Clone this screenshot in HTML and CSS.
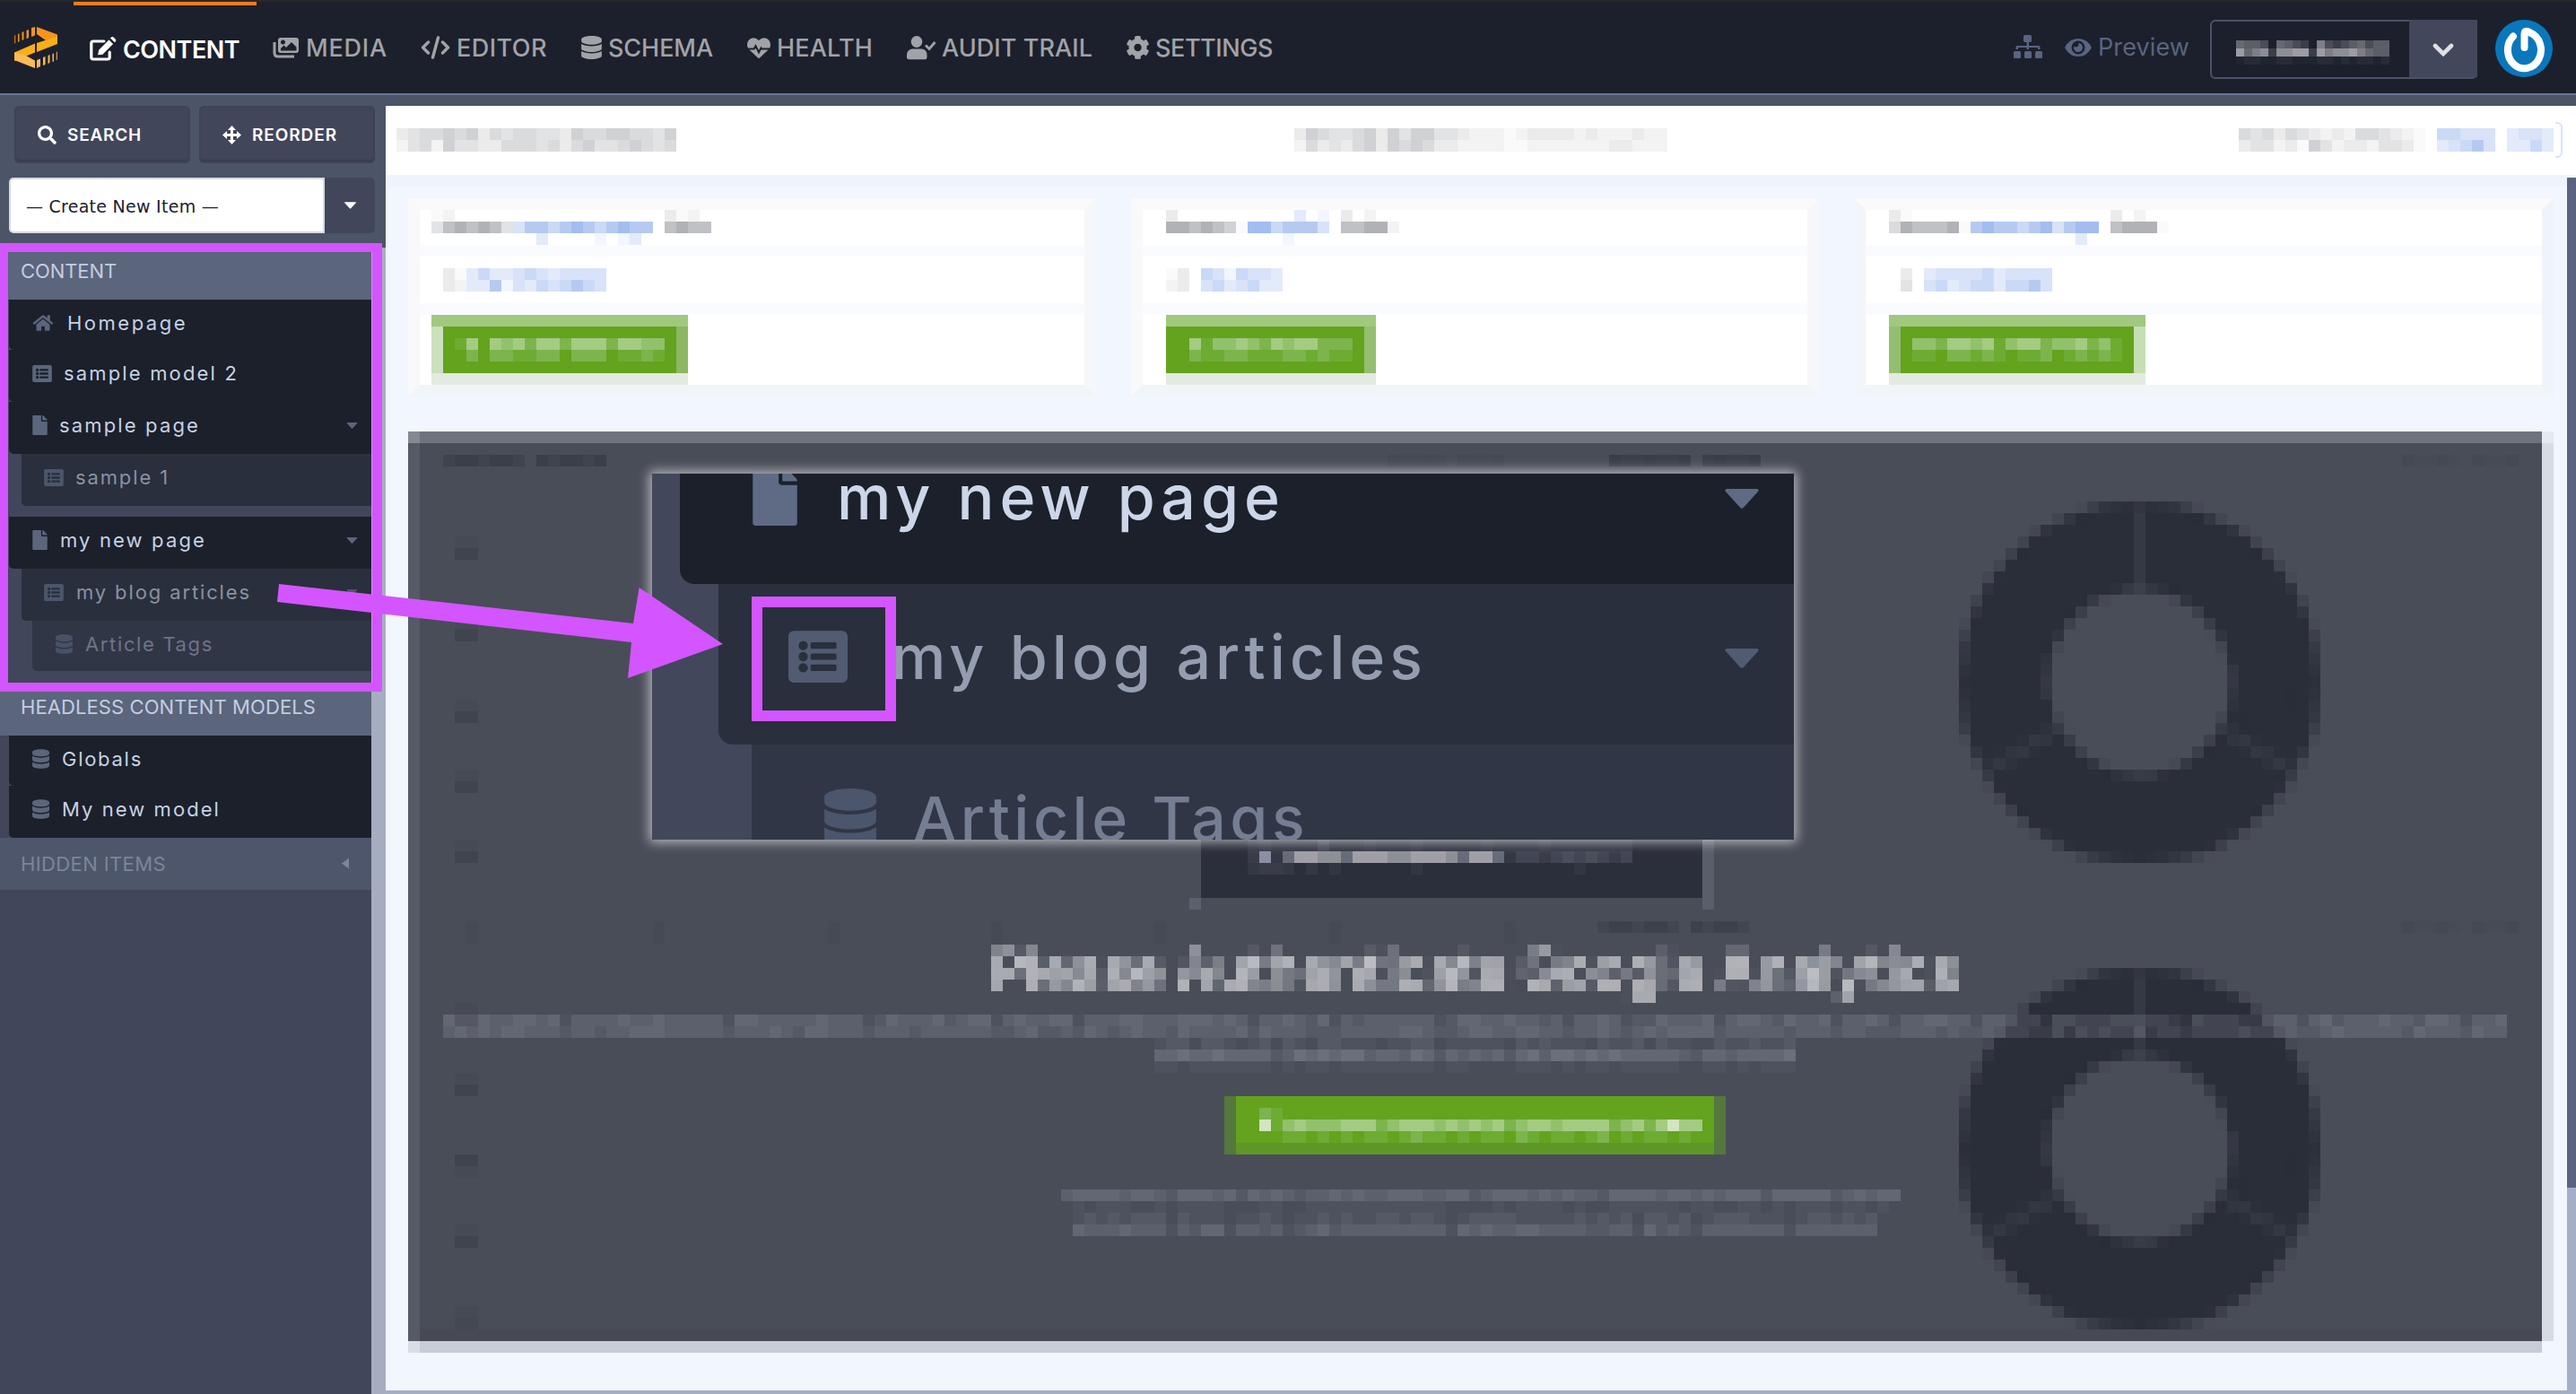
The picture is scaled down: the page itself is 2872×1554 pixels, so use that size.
FILE: index.html
```html
<!DOCTYPE html>
<html lang="en">
<head>
<meta charset="utf-8">
<title>Content</title>
<link rel="stylesheet" href="styles.css">
</head>
<body>
<svg class="defs" width="0" height="0">
  <symbol id="home" viewBox="0 0 576 512"><path d="M280.37 148.26L96 300.11V464a16 16 0 0 0 16 16l112.06-.29a16 16 0 0 0 15.92-16V368a16 16 0 0 1 16-16h64a16 16 0 0 1 16 16v95.64a16 16 0 0 0 16 16.05L464 480a16 16 0 0 0 16-16V300L295.67 148.26a12.19 12.19 0 0 0-15.3 0zM571.6 251.47L488 182.56V44.05a12 12 0 0 0-12-12h-56a12 12 0 0 0-12 12v72.61L318.47 43a48 48 0 0 0-61 0L4.34 251.47a12 12 0 0 0-1.6 16.9l25.5 31A12 12 0 0 0 45.15 301l235.22-193.74a12.19 12.19 0 0 1 15.3 0L530.9 301a12 12 0 0 0 16.9-1.6l25.5-31a12 12 0 0 0-1.7-16.93z"/></symbol>
  <symbol id="db" viewBox="0 0 448 512"><path d="M448 73.143v45.714C448 159.143 347.667 192 224 192S0 159.143 0 118.857V73.143C0 32.857 100.333 0 224 0s224 32.857 224 73.143zM448 176v102.857C448 319.143 347.667 352 224 352S0 319.143 0 278.857V176c48.125 33.143 136.208 48.572 224 48.572S399.874 209.143 448 176zm0 160v102.857C448 479.143 347.667 512 224 512S0 479.143 0 438.857V336c48.125 33.143 136.208 48.572 224 48.572S399.874 369.143 448 336z"/></symbol>
  <symbol id="file" viewBox="0 0 384 512"><path d="M224 136V0H24C10.7 0 0 10.7 0 24v464c0 13.3 10.7 24 24 24h336c13.3 0 24-10.7 24-24V160H248c-13.2 0-24-10.8-24-24zm160-14.1v6.1H256V0h6.1c6.4 0 12.5 2.5 17 7l97.9 98c4.5 4.5 7 10.6 7 16.9z"/></symbol>
  <symbol id="list" viewBox="0 32 512 448"><path fill-rule="evenodd" d="M464 480H48c-26.51 0-48-21.49-48-48V80c0-26.51 21.49-48 48-48h416c26.51 0 48 21.49 48 48v352c0 26.51-21.49 48-48 48zM128 120a40 40 0 1 0 0 80a40 40 0 1 0 0-80zm0 96a40 40 0 1 0 0 80a40 40 0 1 0 0-80zm0 96a40 40 0 1 0 0 80a40 40 0 1 0 0-80zM204 132h200q12 0 12 12v32q0 12-12 12H204q-12 0-12-12v-32q0-12 12-12zM204 228h200q12 0 12 12v32q0 12-12 12H204q-12 0-12-12v-32q0-12 12-12zM204 324h200q12 0 12 12v32q0 12-12 12H204q-12 0-12-12v-32q0-12 12-12z"/></symbol>
  <symbol id="caret" viewBox="0 0 12 7"><path d="M.6 0h10.8q.8.3.3 1L6.6 6.6q-.6.6-1.2 0L.3 1Q-.2.300.6 0z"/></symbol>
  <filter id="pixelate" filterUnits="userSpaceOnUse" primitiveUnits="userSpaceOnUse" x="0" y="0" width="1092" height="78" color-interpolation-filters="sRGB">
    <feGaussianBlur in="SourceGraphic" stdDeviation="2.8" result="soft"/>
    <feFlood x="6" y="6" width="1" height="1" flood-color="#000"/>
    <feComposite x="0" y="0" width="13" height="13"/>
    <feTile result="grid"/>
    <feComposite in="soft" in2="grid" operator="in"/>
    <feMorphology operator="dilate" radius="6"/>
  </filter>
</svg>

<header class="topbar">
  <svg class="logo" viewBox="0 0 48 46">
    <path fill="#f7941e" d="M25 0L48 8.500v2.500L35 15 25 8z"/>
    <path fill="#fbae17" d="M48 10.500v8.500L25 28v-10zM23 18.500v10L0 38v-9.500z"/>
    <path fill="#f9bb55" d="M0 28.500L13 32l10 5.500V46L0 37z"/>
    <path fill="#f7941e" d="M19 1l4-1v9.500l-4 1.500zM13.500 4l2.500-1v9l-2.500 1.200zM8.500 6l2-1v9l-2 1zM4 8l1.500-.7v9l-1.500.7zM.2 9.500l1-.5v9l-1 .5z"/>
    <path fill="#f9bb55" d="M25 37l4-1.500V44l-4 2zM32 34l2.500-1v9l-2.500 1zM37.500 32l2-1v9l-2 1zM42.500 30l1.500-.6v9l-1.500.7zM46.800 28l1-.5v9l-1 .5z"/>
  </svg>
  <nav class="nav">
    <a class="nav-item active"><svg width="30" height="27" viewBox="0 0 30 27"><path d="M16 5H4Q1.800 5 1.800 7.200v15.600Q1.800 25 4 25h16q2.200 0 2.200-2.200V17" fill="none" stroke="currentColor" stroke-width="3.200" stroke-linecap="round"/><path fill="currentColor" stroke="#1c202c" stroke-width="1.200" d="M9.500 14.500L21.500 2.500l5.500 5.500L15 20l-6.500 1z"/><path fill="currentColor" d="M23 1.500l1-1q1.300-1 2.600 0l2.200 2.200q1 1.300 0 2.600l-1 1z"/></svg><span data-w="130">CONTENT</span></a>
    <a class="nav-item"><svg width="30" height="24" viewBox="0 0 30 24"><path fill="none" stroke="currentColor" stroke-width="3" d="M2 6v12q0 4 4 4h18"/><path fill="currentColor" fill-rule="evenodd" d="M9 1h17q3 0 3 3v11q0 3-3 3H9q-3 0-3-3V4q0-3 3-3zM11.500 3.500a2.500 2.500 0 1 0 0 5a2.500 2.500 0 1 0 0-5zM9 15.500h17.500v-4L21 6l-6 6-2.500-2.500L9 13z"/></svg><span data-w="91">MEDIA</span></a>
    <a class="nav-item"><svg width="33" height="26" viewBox="0 0 33 26" fill="none" stroke="currentColor" stroke-width="3.400" stroke-linecap="round" stroke-linejoin="round"><path fill="none" d="M8.500 7L2.500 13l6 6M24.500 7l6 6-6 6M19.500 2l-6 22"/></svg><span data-w="101">EDITOR</span></a>
    <a class="nav-item"><svg width="23" height="26"><use href="#db"/></svg><span data-w="117">SCHEMA</span></a>
    <a class="nav-item"><svg width="26" height="23" viewBox="0 0 26 23"><path fill="currentColor" d="M13 3Q9-1 4.500.7 0 3 0 8q0 2 1 3.500h6L9.500 7l3.500 7 2.500-4.500 1.200 2H25q1-1.500 1-3.500 0-5-4.500-7.300Q17-1 13 3z"/><path fill="currentColor" d="M2.500 13.500h5.700l1.200-2 3.600 7 2.600-5h8L14 22.600q-1 .7-2 0z"/></svg><span data-w="107">HEALTH</span></a>
    <a class="nav-item"><svg width="33" height="27" viewBox="0 0 33 27"><ellipse cx="11" cy="6.500" rx="6.300" ry="6.500" fill="currentColor"/><path fill="currentColor" d="M6 14.500h11q5.500 1 5.500 7V24q0 2.300-2.500 2.300H2.500Q0 26.300 0 24v-2.500q0-6 6-7z"/><path d="M21 10.500l4 4L31.500 7" fill="none" stroke="currentColor" stroke-width="2.800"/></svg><span class="tight" data-w="168">AUDIT TRAIL</span></a>
    <a class="nav-item"><svg width="25" height="26" viewBox="16 8 480 496"><path d="M487.400 315.700l-42.600-24.600c4.300-23.200 4.300-47 0-70.200l42.600-24.600c4.900-2.800 7.100-8.600 5.500-14-11.100-35.600-30-67.800-54.700-94.600-3.800-4.100-10-5.100-14.800-2.300L380.800 110c-17.900-15.400-38.500-27.300-60.800-35.100V25.800c0-5.600-3.900-10.500-9.400-11.700-36.700-8.200-74.300-7.800-109.200 0-5.500 1.200-9.400 6.100-9.400 11.700V75c-22.200 7.900-42.800 19.800-60.800 35.100L88.700 85.500c-4.900-2.800-11-1.900-14.800 2.300-24.700 26.700-43.600 58.900-54.700 94.600-1.700 5.400.6 11.200 5.500 14L67.300 221c-4.300 23.200-4.300 47 0 70.200l-42.600 24.600c-4.900 2.800-7.100 8.600-5.500 14 11.100 35.600 30 67.800 54.700 94.600 3.800 4.100 10 5.100 14.800 2.300l42.600-24.600c17.900 15.400 38.500 27.300 60.800 35.100v49.200c0 5.600 3.900 10.500 9.400 11.700 36.700 8.200 74.300 7.800 109.200 0 5.500-1.200 9.400-6.100 9.400-11.700v-49.200c22.200-7.900 42.800-19.800 60.800-35.100l42.600 24.600c4.900 2.800 11 1.900 14.800-2.300 24.700-26.700 43.600-58.900 54.700-94.600 1.500-5.500-.7-11.300-5.600-14.100zM256 336c-44.100 0-80-35.900-80-80s35.900-80 80-80 80 35.900 80 80-35.900 80-80 80z"/></svg><span data-w="131">SETTINGS</span></a>
  </nav>
  <div class="tools">
    <svg class="sitemap" width="32" height="26" viewBox="0 0 32 26"><path fill="currentColor" d="M11 1.500Q11 0 12.500 0h6Q20 0 20 1.500v5Q20 8 18.500 8H17v4h11q1.500 0 1.500 1.500V16H27v-2H17v2h-2.500v-2H5v2H2.500v-2.500Q2.500 12 4 12h10.500V8h-2Q11 8 11 6.500z"/><rect x="0" y="18" width="8" height="8" rx="1.500"/><rect x="12" y="18" width="8" height="8" rx="1.500"/><rect x="24" y="18" width="8" height="8" rx="1.500"/></svg>
    <svg class="eye" width="30" height="20" viewBox="0 0 30 20"><path fill-rule="evenodd" d="M15 0Q25 0 30 10 25 20 15 20T0 10Q5 0 15 0zM15 2.500a7.500 7.500 0 1 0 0 15a7.500 7.500 0 1 0 0-15z"/><path d="M15 5a5 5 0 1 1-4.800 3.700q2.600 1.600 4.300 0T15 5z"/></svg>
    <span class="preview" data-w="102">Preview</span>
    <div class="site-select">
      <div class="site-name"><canvas class="mosaic" data-cell="9" data-rows="SRRQ.SRQP.TQPQRSQRR|VSTUPUUVVPVTUUVTSRR|NOONNOONNNOONONOONO"></canvas></div>
      <div class="site-caret"><svg width="24" height="16" viewBox="0 0 24 16"><path d="M3 3l9 9 9-9" fill="none" stroke="#dfe0e5" stroke-width="4.600" stroke-linecap="round"/></svg></div>
    </div>
    <svg class="avatar" width="64" height="64" viewBox="0 0 64 64"><circle cx="32" cy="32" r="32" fill="#0a77bb"/><path d="M20 18.500A18.500 20.500 0 1 0 39 14.500Q32.500 10.500 32.500 16V31" fill="none" stroke="#fff" stroke-width="8" stroke-linecap="round" stroke-linejoin="round"/></svg>
  </div>
</header>

<div class="shell">
  <aside class="sidebar">
    <div class="actions">
      <div class="buttons">
        <button class="btn"><svg width="21" height="21" viewBox="0 0 512 512"><path d="M505 442.700L405.300 343c-4.500-4.500-10.600-7-17-7H372c27.600-35.300 44-79.700 44-128C416 93.100 322.900 0 208 0S0 93.100 0 208s93.100 208 208 208c48.300 0 92.700-16.400 128-44v16.300c0 6.400 2.500 12.500 7 17l99.700 99.700c9.400 9.400 24.600 9.400 33.900 0l28.300-28.300c9.400-9.400 9.400-24.600.1-34zM208 336c-70.700 0-128-57.200-128-128 0-70.700 57.200-128 128-128 70.700 0 128 57.200 128 128 0 70.700-57.200 128-128 128z"/></svg><span data-w="83">SEARCH</span></button>
        <button class="btn"><svg width="21" height="21" viewBox="0 0 21 21"><path d="M10.500 0L15 5h-3v4h4V6l5 4.500-5 4.500v-3h-4v4h3l-4.500 5L6 16h3v-4H5v3l-5-4.500L5 6v3h4V5H6z"/></svg><span data-w="95">REORDER</span></button>
      </div>
      <div class="select"><div class="select-value"><span data-w="215">— Create New Item —</span></div><div class="select-caret"><svg width="13" height="8"><use href="#caret"/></svg></div></div>
    </div>
    <div class="tree-wrap">
      <div class="tree">
        <h2><span data-w="107">CONTENT</span></h2>
        <div class="row short"><svg width="24" height="20"><use href="#home"/></svg><span class="g15" data-w="134">Homepage</span></div>
        <div class="row"><svg width="22" height="19"><use href="#list"/></svg><span class="g13" data-w="195">sample model 2</span></div>
        <div class="row"><svg width="17" height="22"><use href="#file"/></svg><span class="g13" data-w="157">sample page</span><svg class="open" width="13" height="7"><use href="#caret"/></svg></div>
        <div class="row sub"><svg width="22" height="19"><use href="#list"/></svg><span class="g13" data-w="105">sample 1</span></div>
        <div class="gap12"></div>
        <div class="row"><svg width="17" height="22"><use href="#file"/></svg><span class="g14" data-w="163">my new page</span><svg class="open" width="13" height="7"><use href="#caret"/></svg></div>
        <div class="row sub"><svg width="22" height="19"><use href="#list"/></svg><span class="g14" data-w="195">my blog articles</span><svg class="open" width="13" height="7"><use href="#caret"/></svg></div>
        <div class="row short subsub"><svg width="19" height="22"><use href="#db"/></svg><span class="g14" data-w="143">Article Tags</span></div>
        <div class="gap14"></div>
        <h2><span data-w="329">HEADLESS CONTENT MODELS</span></h2>
        <div class="row short"><svg width="19" height="22"><use href="#db"/></svg><span class="g14" data-w="90">Globals</span></div>
        <div class="row"><svg width="19" height="22"><use href="#db"/></svg><span class="g14" data-w="177">My new model</span></div>
        <h2 class="hidden-items"><span data-w="162">HIDDEN ITEMS</span><svg width="8" height="13" viewBox="0 0 8 13"><path d="M8 .500v12L0 6.500z"/></svg></h2>
      </div>
      <div class="rail"></div>
    </div>
  </aside>

  <main class="main">
    <div class="crumbs">
      <canvas class="mosaic" data-rows="234454524344332544554435|134153322444342453345434"></canvas>
      <canvas class="mosaic c2" data-rows="25433452535533211101222212111211|14232452545422111100111111122111"></canvas>
      <canvas class="mosaic c3" data-rows="4342432121443210.ddccc.bccb|2331205312213320.bcdec.bbdb"></canvas>
      <i class="edge"></i>
    </div>
    <div class="scroller">
      <div class="page">
        <div class="cards">
          <section class="card">
            <canvas class="mosaic" data-rows="01..................201.|3676763ceedefedefee.6766|.........b....a.ab......"></canvas>
            <div class="line"><canvas class="mosaic in1" data-rows="20bdbbcdcbcccc|21bbeacbdcdedc"></canvas></div>
            <div class="go go1"><canvas class="mosaic" data-rows="gj.jijhjjhjjjhjjii|.h.hhgghh.hhh.gghg"></canvas></div>
          </section>
          <section class="card two">
            <canvas class="mosaic" data-rows="2..........b.a.2.1..|7767650ffdeeec.66771|..........a........."></canvas>
            <div class="line"><canvas class="mosaic" data-rows="02.dcadccb|12.cdbcdbb"></canvas></div>
            <div class="go go2"><canvas class="mosaic" data-rows="jgiijihjijjhhh|hgghhggghhghgg"></canvas></div>
          </section>
          <section class="card three">
            <canvas class="mosaic" data-rows="20.................2.1..|4766670efeedefceff.67770|................b......."></canvas>
            <div class="line"><canvas class="mosaic in1" data-rows="2.bccccdbcccc|3.cdbcddbddec"></canvas></div>
            <div class="go go3"><canvas class="mosaic" data-rows="iihjjijgijjhiijhig|gg.hhghg.ggh.ghghg"></canvas></div>
          </section>
        </div>
        <section class="stats">
          <canvas id="charts" width="184" height="79"></canvas>
          <div class="notice">
            <div class="dark-btn"><canvas class="mosaic" data-rows="XBXXXXCXXXBXXXBXXXXXBXXXXBXXXXXXX|BWXFHHGGFHHHGGHHHGFHHFXCCBCDCDCBCC|XBBX.X.A......A.............A...."></canvas></div>
            <h1><span data-w="1079">Please Authenticate Google Analytics</span></h1>
            <canvas class="mosaic p1" data-noise="177,7" data-rows="2"></canvas>
            <canvas class="mosaic p2" data-noise="55,21" data-rows="3"></canvas>
            <div class="auth-btn"><canvas class="mosaic" data-rows="hg....................................|kgijiiijjjhijjjijijijhijjijjjjhijhjkjji|..gg.g.g.gg.ghgg.g.gg.hg.gg.gh.g.gg.g"></canvas></div>
            <canvas class="mosaic p3" data-noise="72,5" data-rows="2b"></canvas>
            <canvas class="mosaic p4" data-noise="69,33" data-rows="2c"></canvas>
          </div>
        </section>
      </div>
      <div class="scrollbar"><i></i></div>
    </div>
  </main>
</div>

<div class="zoom">
  <div class="zrow z1"><svg width="50" height="66"><use href="#file"/></svg><span data-w="500">my new page</span><svg class="zc" width="38" height="24"><use href="#caret"/></svg></div>
  <div class="zrow z2"><svg width="66" height="58"><use href="#list"/></svg><span data-w="597">my blog articles</span><svg class="zc" width="38" height="24"><use href="#caret"/></svg></div>
  <div class="zrow z3"><svg width="58" height="66"><use href="#db"/></svg><span data-w="441">Article Tags</span></div>
  <div class="mark"></div>
</div>
<div class="frame"></div>
<svg class="arrow" width="500" height="112" viewBox="308 646 500 112"><path d="M311 651L706 695 712.600 655 806 718 700 756 704 716 309 671z"/></svg>
<script src="main.js"></script>
</body>
</html>
```
FILE: styles.css
```css
* { box-sizing: border-box; }
html, body { margin: 0; }
body {
  width: 2872px; height: 1554px; overflow: hidden; position: relative;
  display: flex; flex-direction: column;
  background: #f1f6ff; font-family: Inter, "Noto Sans", sans-serif;
}
svg { display: block; flex: none; fill: currentColor; }
.defs { position: absolute; }
span { white-space: nowrap; }
canvas { display: block; flex: none; image-rendering: pixelated; }

.topbar {
  height: 118px; flex: none; display: flex; padding: 0 26px 0 16px;
  background: linear-gradient(#282828 0 2px, #1c202c 2px 104px, #6b7594 104px 106px, #4c5467 106px);
}
.logo { width: 48px; height: 46px; margin: 30px 18px 0 0; }
.nav {
  display: grid; grid-template-columns: 222px 165px 179px 185px 178px 245px 170px;
  height: 102px; margin-top: 2px;
}
.nav-item { height: 102px; display: flex; align-items: center; gap: 7px; color: #a1a3a8; font-size: 27px; font-weight: 500; line-height: 30px; }
.nav-item span { margin-top: 1px; }
.tight { margin-left: -1px; }
.active { width: 204px; border-top: 4px solid #f47b20; padding-left: 18px; color: #fff; font-weight: 600; }
.active svg { margin-top: -1px; }
.tools { margin-left: auto; display: flex; height: 108px; align-items: center; color: #5a6480; }
.sitemap { margin: 0 25px 4px 0; }
.eye { margin: 0 7px 3px 0; }
.preview { font-size: 27px; margin: 0 23px 3px 0; }
.site-select { width: 298px; height: 66px; margin-top: 2px; display: flex; border: 2px solid #4a5268; border-right: 0; border-top-left-radius: 6px; border-bottom-right-radius: 6px; border-bottom-left-radius: 6px; }
.site-name { flex: 1; padding: 21px 0 0 27px; }
.site-caret { width: 76px; height: 64px; margin-top: -2px; background: #42475b; display: flex; align-items: center; justify-content: center; padding-top: 4px; }
.avatar { margin-left: 20px; }

.shell { flex: 1; display: flex; min-height: 0; }
.sidebar { width: 430px; flex: none; display: flex; flex-direction: column; }
.actions { height: 158px; flex: none; background: #4c5467; }
.buttons { display: flex; gap: 10px; padding-left: 16px; }
.btn {
  width: 196px; height: 64px; border: 0; border-radius: 6px; padding: 1px 0 0 26px;
  display: flex; align-items: center; gap: 12px;
  background: #41465a; box-shadow: inset 0 0 0 2px #3e4356, inset 0 -4px 2px #393e50;
  color: #fff; font: 600 19px Inter, sans-serif;
}
.select { display: flex; margin: 16px 0 0 10px; height: 62px; width: 408px; }
.select-value {
  width: 352px; background: #fff; border: 2px solid #d9dadc; border-radius: 5px 0 0 5px;
  display: flex; align-items: center; padding: 2px 0 0 17px;
  font-family: "DejaVu Sans", sans-serif; font-size: 19px; color: #1c202c;
}
.select-caret { width: 56px; background: #41465a; border-radius: 0 5px 5px 0; color: #fff; display: flex; align-items: center; justify-content: center; }
.tree-wrap { flex: 1; display: flex; }
.rail { width: 16px; background: #a7adc0; }
.tree { width: 414px; background: #41465a; }
.tree h2 {
  margin: 0; height: 58px; padding: 0 25px 6px 23px; background: #5b657c; color: #c3cde0;
  font-size: 22px; font-weight: 400; display: flex; align-items: center; justify-content: space-between;
}
.tree h2.hidden-items { background: #4e566b; color: #7c8599; padding-bottom: 1px; }
.row {
  height: 58px; margin-left: 10px; padding: 0 15px 6px 26px; display: flex; align-items: center;
  background: #1b202b; border-bottom-left-radius: 5px; color: #5b657c; font-size: 22px;
}
.short { height: 56px; padding-bottom: 4px; }
.row span { color: #c8d1e3; }
.g13 { margin-left: 13px; }
.g14 { margin-left: 14px; }
.g15 { margin-left: 15px; }
.open { margin-left: auto; }
.sub { margin-left: 24px; padding-left: 25px; background: #292f3c; color: #4c566b; }
.sub span { color: #8a91a2; }
.subsub { margin-left: 36px; padding-left: 26px; background: #313646; color: #485166; }
.subsub span { color: #6d7488; }
.gap12 { height: 12px; }
.gap14 { height: 14px; }

.main { flex: 1; display: flex; flex-direction: column; min-width: 0; }
.crumbs { height: 77px; background: #fff; display: flex; padding: 25px 0 0 12px; }
.c2 { margin-left: 689px; }
.c3 { margin-left: 637px; }
.edge { width: 8px; height: 40px; margin: -7px 0 0 2px; border: 2px solid #d9e3fd; border-left: 0; border-radius: 0 6px 6px 0; }
.scroller { flex: 1; display: flex; border-bottom: 4px solid #a4afc4; }
.page { flex: 1; background: linear-gradient(#eff3fd 0 13px, #f1f6ff 13px); padding: 26px 0 0 25px; }
.scrollbar { width: 10px; margin-top: 3px; background: #a4aec6; }
.scrollbar i { display: block; height: 1126px; background: #5a6480; }
.cards { display: flex; gap: 39px; }
.card {
  width: 767px; height: 221px; background: #fff; padding-left: 13px;
  border: 13px solid #f5f7fa; border-top-color: #fafafa; border-bottom-color: #f1f5f8; border-left-color: #f9f9fb;
}
.two { padding-left: 26px; }
.three { width: 780px; padding-left: 26px; border-left-color: #f2f5fa; border-right-color: #eff3fa; }
.line { height: 78px; margin-left: -13px; border: 13px solid #fafbff; border-left: 0; border-right: 0; padding: 13px 0 0 13px; }
.two .line, .three .line { margin-left: -26px; padding-left: 26px; }
.in1 { margin-left: 13px; }
.go {
  height: 78px; width: 286px; padding: 26px 0 0 26px;
  background:
    linear-gradient(var(--l), var(--l)) 0 13px / 13px 52px no-repeat,
    linear-gradient(var(--r), var(--r)) 100% 13px / 13px 52px no-repeat,
    linear-gradient(#a1c87f 0 13px, #64a31e 13px 65px, #e3eae0 65px);
}
.go1 { --l: #cbe0bd; --r: #8ab863; }
.go2 { --l: #64a31e; --r: #93bf72; width: 234px; }
.go3 { --l: #93bf72; --r: #c6deb4; }

.stats { position: relative; width: 2392px; height: 1027px; margin-top: 39px; }
#charts { position: absolute; left: 0; top: 0; width: 2392px; height: 1027px; }
.notice { position: relative; display: flex; flex-direction: column; align-items: flex-start; padding-top: 429px; }
.dark-btn { width: 559px; height: 91px; margin-left: 884px; padding: 26px 0 0 52px; background: #2b2e3b; }
h1 {
  width: 1092px; height: 78px; margin: 52px 0 0 650px; filter: url(#pixelate);
  font-size: 61px; font-weight: 600; line-height: 56px; color: #c2c4c9;
}
.p1 { margin-left: 39px; }
.p2 { margin-left: 832px; }
.auth-btn {
  width: 559px; height: 65px; margin: 26px 0 0 910px; padding: 13px 0 0 39px;
  background:
    linear-gradient(#54783d, #54783d) 0 0 / 13px 100% no-repeat,
    linear-gradient(#54783d, #54783d) 100% 0 / 13px 100% no-repeat,
    linear-gradient(#64a31e 0 52px, #5e9728 52px);
}
.p3 { margin: 39px 0 0 728px; }
.p4 { margin-left: 741px; }

.zoom {
  position: absolute; left: 727px; top: 528px; width: 1273px; height: 408px; overflow: hidden;
  background: #42475b; box-shadow: 0 0 12px 3px rgba(255, 255, 255, .6);
}
.zrow { display: flex; align-items: center; font-size: 68px; font-weight: 500; border-bottom-left-radius: 16px; }
.zrow span { line-height: 80px; }
.zc { margin-left: auto; }
.z1 { height: 123px; margin-left: 31px; padding: 0 39px 74px 81px; background: #1b202b; color: #5f6b85; }
.z1 span { margin-left: 44px; color: #ccd6e8; margin-top: 3px; }
.z1 .zc { margin-top: 6px; }
.z2 { height: 179px; margin-left: 74px; padding: 0 39px 18px 78px; background: #292f3c; color: #515c72; }
.z2 span { margin-left: 49px; color: #959db0; }
.z2 .zc { margin-top: 5px; }
.z3 { height: 180px; margin-left: 111px; padding: 0 0 16px 81px; background: #313646; color: #4b556b; }
.z3 span { margin-left: 41px; color: #757d92; }
.mark { position: absolute; left: 111px; top: 137px; width: 161px; height: 139px; border: 12px solid #d355ff; }
.frame { position: absolute; left: -1px; top: 271px; width: 427px; height: 500px; border: 10px solid #d355ff; border-right-width: 11px; }
.arrow { position: absolute; left: 308px; top: 646px; fill: #d355ff; }
```
FILE: main.js
```js
// Letter spacing is derived from the label width each element declares.
document.querySelectorAll('[data-w]').forEach(function (el) {
  var natural = el.getBoundingClientRect().width;
  var n = el.textContent.length;
  el.style.letterSpacing = ((+el.dataset.w - natural) / n) + 'px';
});

// One character per redacted cell; capitals A-F are translucent tints for dark surfaces.
function tint(a) { return 'rgba(210,216,232,' + a + ')'; }
var PAL = {
  0: '#fafafa', 1: '#f3f3f4', 2: '#ebebec', 3: '#e2e3e5', 4: '#dadbdd', 5: '#d0d1d4', 6: '#c0c1c4', 7: '#b1b2b6',
  a: '#f1f6ff', b: '#e3eafa', c: '#d8e2f9', d: '#cad9f6', e: '#b6caf1', f: '#a3bdee',
  g: '#6dac33', h: '#7db44d', i: '#92c16c', j: '#a4cb82', k: '#d3e4c1',
  A: tint(.045), B: tint(.09), C: tint(.14), D: tint(.19), E: tint(.25), F: tint(.36), G: '#8d8f96', H: '#a09fa6',
  W: '#8a8fa3', X: '#343845',
  N: '#20242f', O: '#282b37', P: '#3b3e49', Q: '#4a4c56', R: '#5c5e67', S: '#666872', T: '#7d7e88', U: '#8c8d96', V: '#9d9ca6'
};
function noiseRows(spec, kind) {
  var parts = spec.split(','), cols = +parts[0], s = +parts[1] * 7919;
  function rnd() { s = (s * 1103515 + 12345) % 2147483647; return s / 2147483647; }
  var gaps = [], x = 0;
  while (x < cols) { x += 5 + Math.floor(rnd() * 12); gaps.push(x); }
  function row(set) {
    var out = '';
    for (var i = 0; i < cols; i++) {
      out += gaps.indexOf(i) >= 0 ? set[0] : set[1 + Math.floor(rnd() * (set.length - 1))];
    }
    return out;
  }
  if (kind === '2') return [row('ACCDCCDBCD'), row('BCCDCBCDC')];
  if (kind === '3') return [row('.ABAAB.'), row('BDEDCDDE'), row('.AA.A')];
  if (kind === '2b') return [row('BDCDDCDC'), row('.AA.A')];
  return [row('.BABBA'), row('ACCBDCC')];
}
document.querySelectorAll('canvas.mosaic').forEach(function (c) {
  var rows = c.dataset.noise ? noiseRows(c.dataset.noise, c.dataset.rows) : c.dataset.rows.split('|');
  var cell = +(c.dataset.cell || 13);
  c.width = rows[0].length;
  c.height = rows.length;
  c.style.width = c.width * cell + 'px';
  c.style.height = c.height * cell + 'px';
  var g = c.getContext('2d');
  rows.forEach(function (r, y) {
    for (var x = 0; x < r.length; x++) {
      if (PAL[r[x]]) { g.fillStyle = PAL[r[x]]; g.fillRect(x, y, 1, 1); }
    }
  });
});

// Analytics panel backdrop, drawn at one canvas pixel per cell.
var g = document.getElementById('charts').getContext('2d');
function box(x, y, w, h, col) { g.fillStyle = col; g.fillRect(x, y, w, h); }
box(0, 0, 183, 1, '#6f737e');
box(0, 0, 1, 1, '#858993');
box(0, 1, 1, 77, '#555a66');
box(1, 1, 182, 77, '#494d58');
box(183, 0, 1, 1, '#e5e9f3');
box(183, 1, 1, 77, '#d7dbe4');
box(0, 78, 183, 1, '#c8ccd7');
box(0, 78, 1, 1, '#d9dde7');
box(1, 77, 182, 1, '#474a54');
box(67, 40, 1, 1, '#5c606d');
box(111, 35, 1, 6, '#5a5e6b');
[[9, 0], [16, 0], [23, 1], [29, 0], [35, 0], [49, 1], [55, 0], [62, 2], [68, 0], [75, 3]].forEach(function (p) {
  box(4, p[0], 2, 1, p[1] === 2 ? '#3f434c' : '#464a54');
  box(4, p[0] + 1, 2, 1, p[1] === 2 ? '#464a54' : p[1] === 3 ? '#444852' : '#40444e');
});
[5, 21, 36, 50, 64, 79, 94].forEach(function (x) { box(x, 42, 1, 2, '#464a54'); });
function label(x, y, w, c1, c2) {
  for (var i = 0; i < w; i++) if (i !== Math.floor(w * .55)) box(x + i, y, 1, 1, i % 3 ? c1 : c2);
}
label(3, 2, 14, '#3b3f49', '#3f444d');
label(84, 2, 10, '#464a54', '#444953');
label(103, 2, 13, '#3c404a', '#393d46');
label(171, 2, 10, '#464b55', '#444953');
label(102, 42, 13, '#3d414b', '#42464f');
label(171, 42, 10, '#464b55', '#444953');
[21.5, 61.5].forEach(function (cy) {
  g.beginPath();
  g.arc(148.5, cy, 15.45, 0, 7);
  g.arc(148.5, cy, 7.95, 7, 0, true);
  g.fillStyle = '#2a2e38';
  g.fill('evenodd');
  g.strokeStyle = 'rgba(95,99,110,.45)';
  g.lineWidth = .5;
  [-90, 30, 150].forEach(function (d) {
    var a = d * Math.PI / 180;
    g.beginPath();
    g.moveTo(148.5 + 8 * Math.cos(a), cy + 8 * Math.sin(a));
    g.lineTo(148.5 + 15.3 * Math.cos(a), cy + 15.3 * Math.sin(a));
    g.stroke();
  });
});
```
